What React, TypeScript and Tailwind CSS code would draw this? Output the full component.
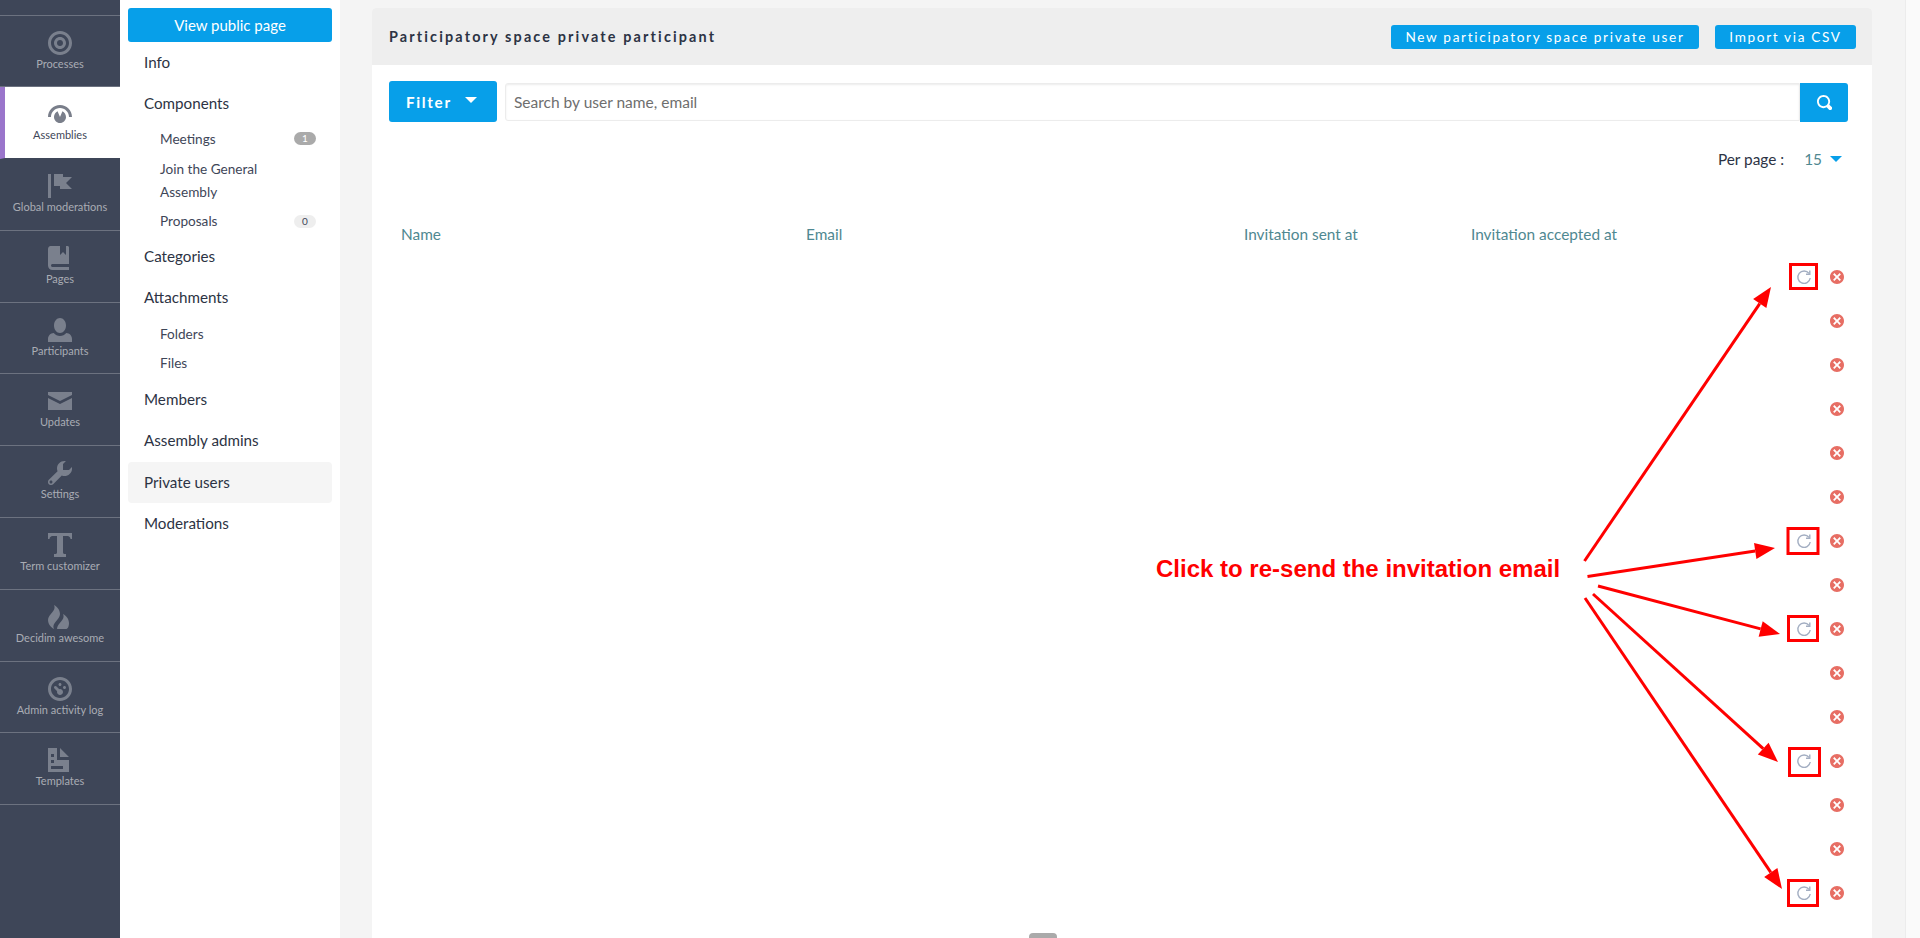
import React from "react";

const P: Record<string, string> = {
  target: "M4 0c-2.2 0-4 1.8-4 4s1.8 4 4 4 4-1.8 4-4-1.8-4-4-4zm0 1c1.66 0 3 1.34 3 3s-1.34 3-3 3-3-1.34-3-3 1.34-3 3-3zm0 1c-1.1 0-2 .9-2 2s.9 2 2 2 2-.9 2-2-.9-2-2-2zm0 1c.56 0 1 .44 1 1s-.44 1-1 1-1-.44-1-1 .44-1 1-1z",
  dial: "M4 1c-2.2 0-4 1.8-4 4h1c0-1.66 1.34-3 3-3s3 1.34 3 3h1c0-2.2-1.8-4-4-4zm-.81 2.09c-.66.31-1.19 1.12-1.19 1.91 0 1.1.9 2 2 2s2-.9 2-2c0-.79-.53-1.6-1.19-1.91l-.81 1.91-.81-1.91z",
  flag: "M0 0v8h1v-8h-1zm2 0v4h2v1h4l-2-1.97 2-2.03h-3v-1h-3z",
  book: "M1 0c-.07 0-.13.01-.19.03-.39.08-.7.39-.78.78-.03.06-.03.12-.03.19v5.5c0 .83.67 1.5 1.5 1.5h5.5v-1h-5.5c-.28 0-.5-.22-.5-.5s.22-.5.5-.5h5.5v-5.5c0-.28-.22-.5-.5-.5h-.5v3l-1-1-1 1v-3h-3z",
  person: "M4 0c-1.1 0-2 1.12-2 2.5s.9 2.5 2 2.5 2-1.12 2-2.5-.9-2.5-2-2.5zm-2.09 5c-1.06.05-1.91.92-1.91 2v1h8v-1c0-1.08-.84-1.95-1.91-2-.54.61-1.28 1-2.09 1-.81 0-1.55-.39-2.09-1z",
  mail: "M0 1v1l4 2 4-2v-1h-8zm0 2v4h8v-4l-4 2-4-2z",
  wrench: "M5.5 0c-1.38 0-2.5 1.12-2.5 2.5 0 .32.08.62.19.91l-2.91 2.88c-.39.39-.39 1.05 0 1.44.2.2.46.28.72.28.26 0 .52-.09.72-.28l2.88-2.91c.28.11.59.19.91.19 1.38 0 2.5-1.12 2.5-2.5 0-.16 0-.32-.03-.47l-.97.97h-2v-2l.97-.97c-.15-.03-.31-.03-.47-.03zm-4.5 6.5c.28 0 .5.22.5.5s-.22.5-.5.5-.5-.22-.5-.5.22-.5.5-.5z",
  text: "M0 0v2h.5c0-.55.45-1 1-1h1.5v5.5c0 .28-.22.5-.5.5h-.5v1h4v-1h-.5c-.28 0-.5-.22-.5-.5v-5.5h1.5c.55 0 1 .45 1 1h.5v-2h-8z",
  fire: "M2 0c1 2-2 3-2 5s2 3 2 3c-.98-1.98 2-3 2-5s-2-3-2-3zm3 3c1 2-2 3-2 5h3c.4 0 1-.5 1-2 0-2-2-3-2-3z",
  dash: "M4 0c-2.2 0-4 1.8-4 4s1.8 4 4 4 4-1.8 4-4-1.8-4-4-4zm0 1c1.66 0 3 1.34 3 3s-1.34 3-3 3-3-1.34-3-3 1.34-3 3-3zm0 1c-.28 0-.5.22-.5.5s.22.5.5.5.5-.22.5-.5-.22-.5-.5-.5zm-1.66 1a.5.5 0 0 0-.19.84l.91.91c-.02.08-.06.16-.06.25 0 .55.45 1 1 1s1-.45 1-1-.45-1-1-1c-.09 0-.17.04-.25.06l-.91-.91a.5.5 0 0 0-.44-.16.5.5 0 0 0-.06 0zm3.16 0c-.28 0-.5.22-.5.5s.22.5.5.5.5-.22.5-.5-.22-.5-.5-.5z",
  doc: "M0 0v8h7v-4h-4v-4h-3zm4 0v3h3l-3-3zm-3 2h1v1h-1v-1zm0 2h1v1h-1v-1zm0 2h4v1h-4v-1z",
  search: "M3.5 0c-1.93 0-3.5 1.57-3.5 3.5s1.57 3.5 3.5 3.5c.59 0 1.17-.14 1.66-.41a1 1 0 0 0 .13.13l1 1a1.02 1.02 0 1 0 1.44-1.44l-1-1a1 1 0 0 0-.16-.13c.27-.49.44-1.04.44-1.63 0-1.93-1.57-3.5-3.5-3.5zm0 1c1.39 0 2.5 1.11 2.5 2.5 0 .66-.24 1.27-.66 1.72-.01.01-.02.02-.03.03a1 1 0 0 0-.13.13c-.44.4-1.04.63-1.69.63-1.39 0-2.5-1.11-2.5-2.5s1.11-2.5 2.5-2.5z",
  x: "M4 0c-2.21 0-4 1.79-4 4s1.79 4 4 4 4-1.79 4-4-1.79-4-4-4zm-1.5 1.78l1.5 1.5 1.5-1.5.72.72-1.5 1.5 1.5 1.5-.72.72-1.5-1.5-1.5 1.5-.72-.72 1.5-1.5-1.5-1.5.72-.72z",
};

function Ic({ n, className }: { n: string; className: string }) {
  return (
    <svg viewBox="0 0 8 8" className={className} fill="currentColor">
      <path d={P[n]} />
    </svg>
  );
}

function Reload() {
  return (
    <svg viewBox="0 0 16 16" className="mr-[18.5px] h-[16px] w-[16px] text-[#a3aec2]" fill="none" stroke="currentColor" strokeWidth="1.4">
      <path d="M13 4.4A6.2 6.2 0 1 0 14.2 9" />
      <path d="M13.8 1.4V5.2H10" />
    </svg>
  );
}

const nav = [
  ["target", "Processes"],
  ["dial", "Assemblies"],
  ["flag", "Global moderations"],
  ["book", "Pages"],
  ["person", "Participants"],
  ["mail", "Updates"],
  ["wrench", "Settings"],
  ["text", "Term customizer"],
  ["fire", "Decidim awesome"],
  ["dash", "Admin activity log"],
  ["doc", "Templates"],
];

function Arrow({ a, b, w = 3 }: { a: [number, number]; b: [number, number]; w?: number }) {
  const dx = b[0] - a[0];
  const dy = b[1] - a[1];
  const l = Math.hypot(dx, dy);
  const ux = dx / l;
  const uy = dy / l;
  const hl = 20;
  const hw = 8;
  const bx = b[0] - ux * hl;
  const by = b[1] - uy * hl;
  return (
    <g>
      <line x1={a[0]} y1={a[1]} x2={bx} y2={by} stroke="#ff0000" strokeWidth={w} />
      <polygon
        fill="#ff0000"
        points={`${b[0]},${b[1]} ${bx - uy * hw},${by + ux * hw} ${bx + uy * hw},${by - ux * hw}`}
      />
    </g>
  );
}

const boxes = [
  [1789, 263, 29, 27],
  [1786.5, 527, 33, 28],
  [1787, 615, 32, 27],
  [1788, 747, 33, 30],
  [1787, 879, 32, 28],
];

const refreshRows = [0, 6, 8, 11, 14];

function SubItem({ label, badge, dark }: { label: string; badge?: string; dark?: boolean }) {
  return (
    <div className="flex h-[29.4px] items-center justify-between pl-[40px] pr-[24px] text-[13.6px] text-[#3e4658]">
      <span>{label}</span>
      {badge && (
        <span
          className={
            dark
              ? "flex h-[13px] w-[22px] items-center justify-center rounded-full bg-[#aaaaaa] text-[10px] text-white"
              : "flex h-[13px] w-[22px] items-center justify-center rounded-full bg-[#eeeeee] text-[10px] text-[#3e4658]"
          }
        >
          {badge}
        </span>
      )}
    </div>
  );
}

function Item({ label, active }: { label: string; active?: boolean }) {
  return (
    <div
      className={
        active
          ? "mx-[8px] flex h-[41px] items-center rounded-[4px] bg-[#f5f5f5] px-[16px] text-[15.2px] text-[#2c3344]"
          : "mx-[8px] flex h-[41px] items-center px-[16px] text-[15.2px] text-[#2c3344]"
      }
    >
      {label}
    </div>
  );
}

export default function App() {
  return (
    <div className="relative flex h-screen overflow-hidden bg-[#fafafa] [font-family:Lato,sans-serif]">
      <aside className="w-[120px] shrink-0 bg-[#3e4658]">
        <div className="h-[15.5px] border-b border-[#6c7280]" />
        {nav.map(([icon, label]) => {
          const active = label === "Assemblies";
          return (
            <div
              key={label}
              className={
                active
                  ? "flex h-[71.8px] flex-col items-center border-b border-[#3e4658] border-l-[5px] border-l-[#9a75cb] bg-white pt-[15px] pr-[5px]"
                  : "flex h-[71.8px] flex-col items-center border-b border-[#6c7280] pt-[15px]"
              }
            >
              <Ic n={icon} className={active ? "h-[24px] w-[24px] text-[#797e8a]" : "h-[24px] w-[24px] text-[#7a808d]"} />
              <span className={active ? "text-[11px] leading-[18px] text-[#3e4658]" : "text-[11px] leading-[18px] text-[#a9acb4]"}>
                {label}
              </span>
            </div>
          );
        })}
      </aside>

      <nav className="w-[220px] shrink-0 bg-white pt-[8px]">
        <div className="mx-[8px] flex h-[34px] items-center justify-center rounded-[3px] bg-[#079fe9] text-[15px] text-white">
          View public page
        </div>
        <Item label="Info" />
        <Item label="Components" />
        <SubItem label="Meetings" badge="1" dark />
        <div className="pb-[2px] pl-[40px] pr-[24px] pt-[5px] text-[13.6px] leading-[23px] text-[#3e4658]">
          Join the General
          <br />
          Assembly
        </div>
        <SubItem label="Proposals" badge="0" />
        <Item label="Categories" />
        <Item label="Attachments" />
        <div className="h-[1.5px]" />
        <SubItem label="Folders" />
        <SubItem label="Files" />
        <div className="h-[1px]" />
        <Item label="Members" />
        <Item label="Assembly admins" />
        <div className="h-[1.3px]" />
        <Item label="Private users" active />
        <Item label="Moderations" />
      </nav>

      <main className="w-[1566px] shrink-0 border-r border-[#ececec] bg-[#f4f4f4] pl-[32px] pt-[8px]">
        <section className="w-[1500px] rounded-t-[4px] bg-white">
          <header className="flex h-[57px] items-center justify-between rounded-t-[4px] bg-[#eeeeee] pl-[17px] pr-[16px]">
            <h1 className="text-[14.4px] font-bold tracking-[2.15px] text-[#2c3344]">Participatory space private participant</h1>
            <div className="flex gap-[16px]">
              <button className="flex h-[24px] w-[308px] items-center justify-center rounded-[3px] bg-[#079fe9] pt-[1px] text-[13.6px] tracking-[1.7px] text-white">
                New participatory space private user
              </button>
              <button className="flex h-[24px] w-[141px] items-center justify-center rounded-[3px] bg-[#079fe9] pt-[1px] text-[13.6px] tracking-[1.65px] text-white">
                Import via CSV
              </button>
            </div>
          </header>

          <div className="flex items-start pl-[17px] pr-[24px] pt-[16px]">
            <button className="flex h-[41px] w-[108px] items-center rounded-[3px] bg-[#079fe9] pl-[17px] pt-[1px] text-[15.2px] font-bold tracking-[1.7px] text-white">
              Filter
              <span className="mb-[5px] ml-[13px] h-0 w-0 border-x-[6px] border-t-[6px] border-x-transparent border-t-white" />
            </button>
            <div className="ml-[8px] mt-[2px] flex h-[38px] flex-1 items-center rounded-l-[3px] border border-[#ececec] pl-[8px] pt-[1px] text-[15.5px] text-[#6e6e6e] shadow-[inset_0_1px_2px_rgba(10,10,10,0.08)]">
              Search by user name, email
            </div>
            <div className="mt-[2px] flex h-[39px] w-[48px] items-center justify-center rounded-r-[3px] bg-[#079fe9]">
              <Ic n="search" className="h-[15px] w-[15px] text-white" />
            </div>
          </div>

          <div className="mt-[25px] flex h-[24px] items-center justify-end pr-[30px] pt-[1px] text-[15.4px]">
            <span className="text-[#2c3344]">Per page :</span>
            <span className="ml-[20px] text-[#4f8891]">15</span>
            <span className="mb-[2px] ml-[8px] h-0 w-0 border-x-[6px] border-t-[6px] border-x-transparent border-t-[#079fe9]" />
          </div>

          <div className="mt-[52px] flex h-[24px] items-center pl-[29px] text-[15.4px] text-[#4f8891]">
            <span className="w-[405px]">Name</span>
            <span className="w-[438px]">Email</span>
            <span className="w-[227px]">Invitation sent at</span>
            <span>Invitation accepted at</span>
          </div>

          <div className="mt-[8px]">
            {Array.from({ length: 15 }).map((_, i) => (
              <div key={i} className="flex h-[44px] items-center justify-end pr-[28px]">
                {refreshRows.includes(i) && <Reload />}
                <Ic n="x" className="h-[14px] w-[14px] text-[#e76e64]" />
              </div>
            ))}
          </div>

          <div className="ml-[657px] mt-[18px] h-[20px] w-[28px] rounded-[4px] bg-[#aaaaaa]" />
        </section>
      </main>

      <svg className="pointer-events-none absolute left-0 top-0 h-[938px] w-[1920px]" viewBox="0 0 1920 938">
        {boxes.map(([x, y, w, h], i) => (
          <rect key={i} x={x + 1.5} y={y + 1.5} width={w - 3} height={h - 3} fill="none" stroke="#ff0000" strokeWidth="3" />
        ))}
        <Arrow a={[1584.5, 561]} b={[1771, 287]} />
        <Arrow a={[1587.5, 576.5]} b={[1775, 548]} />
        <Arrow a={[1598, 586]} b={[1780, 634]} />
        <Arrow a={[1593, 594]} b={[1778, 762]} />
        <Arrow a={[1585, 598]} b={[1782, 889]} />
      </svg>
      <div className="absolute left-[1156px] top-[555px] whitespace-nowrap text-[24px] font-bold leading-[28px] text-[#ff0000] [font-family:'Liberation_Sans',sans-serif]">
        Click to re-send the invitation email
      </div>
    </div>
  );
}
